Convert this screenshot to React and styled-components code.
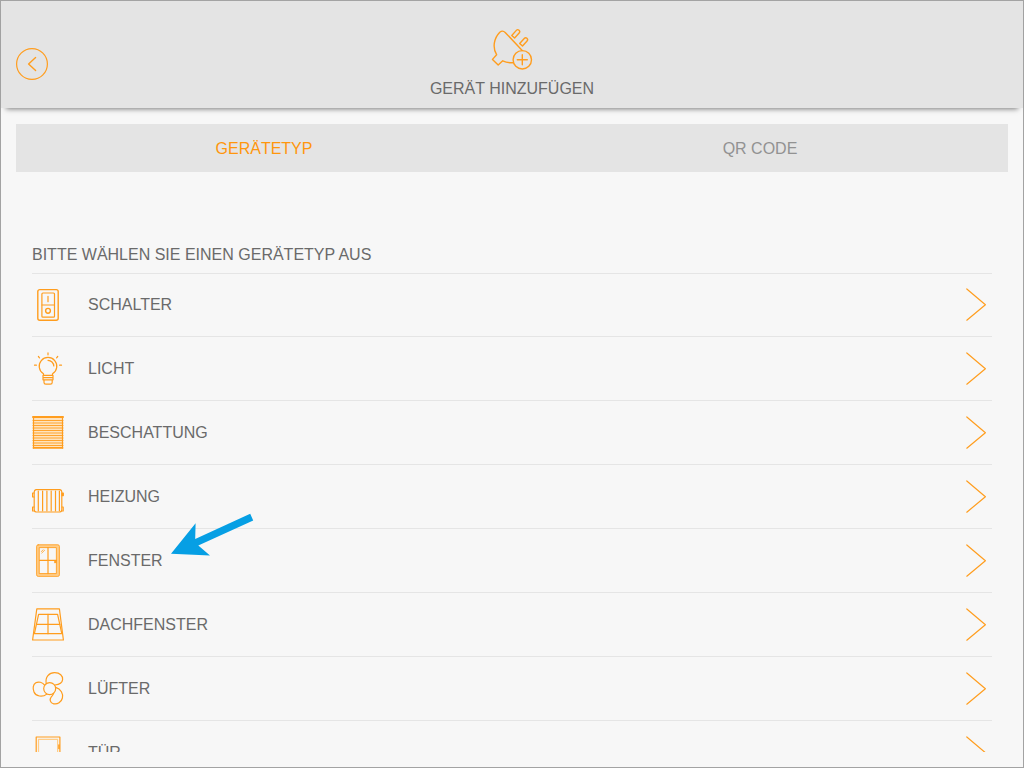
import React from "react";
import styled, { createGlobalStyle } from "styled-components";

const orange = "#ff9d1e";
const paleOrange = "#ffcd88";

const GlobalStyle = createGlobalStyle`
  * { box-sizing: border-box; }
  body {
    margin: 0;
    background: #f7f7f7;
    color: #6a6a6a;
    font-family: "Liberation Sans", Arial, Helvetica, sans-serif;
    font-size: 16px;
    line-height: 24px;
  }
  button {
    margin: 0;
    padding: 0;
    border: 0;
    background: none;
    color: inherit;
    font: inherit;
    cursor: pointer;
  }
`;

const Screen = styled.div`
  display: flex;
  flex-direction: column;
  height: 100vh;
  border: 1px solid #a3a3a3;
`;

const Header = styled.header`
  display: grid;
  grid-template-columns: 1fr auto 1fr;
  align-items: center;
  flex: none;
  padding: 19px 15px 0;
  background: #e4e4e4;
  box-shadow: 0 6px 5px -5px rgba(0, 0, 0, 0.5);
`;

const BackButton = styled.button`
  width: 32px;
  height: 32px;
`;

const TitleBlock = styled.div`
  display: flex;
  flex-direction: column;
  align-items: center;
  gap: 7px;
  padding: 8px 0 7px;
`;

const Title = styled.h1`
  margin: 0;
  font-size: 16px;
  font-weight: 400;
`;

const Drawing = styled.svg`
  display: block;
  flex: none;
  fill: none;
  stroke: ${orange};
  stroke-width: ${(p) => p.$weight || 1.2};
  stroke-linecap: round;
  stroke-linejoin: round;
`;

const Tabs = styled.div`
  display: grid;
  grid-template-columns: 1fr 1fr;
  flex: none;
  margin: 16px 15px 0;
  background: #e4e4e4;
`;

const Tab = styled.button`
  height: 48px;
  padding-top: 2px;
  color: ${(p) => (p.$active ? "#ff960c" : "#929292")};
`;

const Section = styled.main`
  display: flex;
  flex-direction: column;
  flex: 1;
  min-height: 0;
  padding: 71px 31px 15px;
`;

const SectionTitle = styled.h2`
  flex: none;
  margin: 0;
  padding-bottom: 6px;
  border-bottom: 1px solid #e5e5e5;
  font-size: 16px;
  font-weight: 400;
`;

const List = styled.ul`
  flex: 1;
  min-height: 0;
  margin: -1px 0 0;
  padding: 0;
  list-style: none;
  overflow-y: auto;
  scrollbar-width: none;
`;

const Item = styled.li`
  position: relative;
  border-bottom: 1px solid #e5e5e5;
`;

const RowButton = styled.button`
  display: flex;
  align-items: center;
  gap: 24px;
  width: 100%;
  padding: 15px 0 14px;
  text-align: left;
`;

const Label = styled.span`
  flex: 1;
`;

const Pointer = styled.svg`
  position: absolute;
  left: 138px;
  top: -16px;
  fill: #069fe4;
  pointer-events: none;
`;

const icons = {
  switch: (
    <>
      <rect x="5.8" y="1.6" width="20.4" height="30.6" rx="2" strokeWidth="1.4" />
      <rect x="9.9" y="5" width="12.6" height="24.2" rx="1" />
      <path d="M10 17H22.4M16 8.3V13.7" />
      <circle cx="16" cy="22.8" r="2.4" strokeWidth="1.4" />
    </>
  ),
  light: (
    <>
      <path d="M11.5 23.3V21.8A8.8 8.8 0 1 1 20.5 21.8V23.3" />
      <path d="M16 8.3A6 6 0 0 1 21.8 14" />
      <path d="M11 23.4H21V27.8H11ZM11 25.6H21M12 27.8V30.5Q12 32.2 13.8 32.2H18.4Q20.2 32.2 20.2 30.5V27.8" />
      <path d="M16 .9V2.8M2.5 13.2H4.4M27.6 13.2H29.5M6.4 4.5L7.5 5.8M25.7 4.5L24.6 5.8" />
    </>
  ),
  blind: (
    <>
      <rect x="1" y="1" width="30" height="31" fill="#ffe3bd" stroke="none" />
      <path d="M1 1.1H31" strokeWidth="2" />
      <path d="M1.5 1V32M30.5 1V32" />
      <path
        d="M1 4.5H31M1 7H31M1 9.5H31M1 12H31M1 14.5H31M1 17H31M1 19.5H31M1 22H31M1 24.5H31M1 27H31M1 29.5H31"
        strokeWidth=".9"
      />
      <path d="M1.5 31.9H30.5" strokeWidth="1.8" />
    </>
  ),
  heater: (
    <>
      <path d="M4 9.6H28Q29.8 10.2 29.8 12V29.4Q29.8 31.4 28 32H4Q2.2 31.4 2.2 29.4V12Q2.2 10.2 4 9.6Z" />
      <path d="M6.3 11V30.8M10.6 11V30.8M14.9 11V30.8M19.2 11V30.8M23.5 11V30.8M27.4 11V30.8" />
      <path d="M2 13H.6V17H2M2 27H.6V31H2M30 27H31.2V31H30" />
      <path d="M30 13H31.3V15.6H30Z" fill={orange} />
    </>
  ),
  window: (
    <>
      <rect x="5.8" y="1.9" width="20.4" height="29.2" rx="1" stroke={paleOrange} strokeWidth="3" />
      <rect x="4.6" y=".8" width="22.8" height="31.6" rx="1.6" strokeWidth=".8" />
      <rect x="7.6" y="3.6" width="16.8" height="26" strokeWidth=".9" />
      <path d="M16 3.6V29.6M7.6 16.4H24.4M22.8 17.4V18.6M24 17.2V18.6" />
      <path d="M9.5 7.5L11 5.8M9.8 9L12.6 6.3" strokeWidth=".8" />
    </>
  ),
  roofWindow: (
    <>
      <path d="M4.8 .8H27.4L31.4 32H.6Z" />
      <path d="M6.6 6.4H25.6L29.8 25.7H2.4Z" />
      <path d="M5.2 16.4H27.8M16 6.4V25.7" />
    </>
  ),
  fan: (
    <>
      <circle cx="17.7" cy="16.6" r="6" />
      <path d="M14.2 11.7C13 5 17.2 .8 22.5 .7C28 .6 31 4 30.6 7.6C30.2 11.4 27 12.6 23 13" />
      <path d="M12.6 13.2C10.6 10.2 6.4 9.2 3.8 10.8C.8 12.6 .6 17 2 20C3.8 24.4 10.4 25.6 14.8 22.1" />
      <path d="M23.7 15.4C29 17 31.4 22 30.4 26C29.3 30.5 25.5 32.5 21.7 31.8C17.8 31 17.4 27 19.3 24.8C20.3 23.7 21.2 23 21.6 21.3" />
    </>
  ),
  door: (
    <>
      <path d="M4.2 33V1H27.9V33" />
      <path d="M6.5 33V3.4H25.6V33" stroke={paleOrange} />
      <path d="M27 9V12.5" strokeWidth="1.6" />
    </>
  ),
};

const deviceTypes = [
  { label: "SCHALTER", icon: "switch" },
  { label: "LICHT", icon: "light" },
  { label: "BESCHATTUNG", icon: "blind" },
  { label: "HEIZUNG", icon: "heater" },
  { label: "FENSTER", icon: "window", pointed: true },
  { label: "DACHFENSTER", icon: "roofWindow" },
  { label: "LÜFTER", icon: "fan" },
  { label: "TÜR", icon: "door" },
];

function DeviceRow({ label, icon, pointed }) {
  return (
    <Item>
      <RowButton type="button">
        <Drawing width="32" height="34" viewBox="0 0 32 34" aria-hidden="true">
          {icons[icon]}
        </Drawing>
        <Label>{label}</Label>
        <Drawing width="32" height="34" viewBox="0 0 32 34" aria-hidden="true">
          <path d="M6.8 1L25.4 16.7L6.8 32.2" />
        </Drawing>
      </RowButton>
      {pointed && (
        <Pointer width="84" height="44" viewBox="0 0 84 44" aria-hidden="true">
          <path d="M1 40.8L25.6 10.3L25.2 26L80.2 .7L83.2 7.4L28.3 32.6L40 42.6Z" />
        </Pointer>
      )}
    </Item>
  );
}

export default function App() {
  return (
    <>
      <GlobalStyle />
      <Screen>
        <Header>
          <BackButton type="button" aria-label="Zurück">
            <Drawing width="32" height="32" viewBox="0 0 32 32" aria-hidden="true">
              <circle cx="16" cy="16" r="15.4" />
              <path d="M19.6 9.6L12.6 16L19.6 22.6" strokeWidth="1.4" />
            </Drawing>
          </BackButton>
          <TitleBlock>
            <Drawing width="42" height="42" viewBox="0 0 42 42" $weight={1.4} aria-hidden="true">
              <path d="M31.2 22.4L14.2 4.4C12.5 2.8 10.5 2.8 8.8 4.2C3 10 1.2 19.5 5.6 26.7L1.5 31.4L7.2 37L11.7 32.8C15 34.4 18.5 34.9 22 34.8" />
              <circle cx="31.3" cy="31.8" r="9.2" />
              <path d="M31.3 26.8V36.8M26.3 31.8H36.3" />
              <path transform="translate(22.2 8.7) rotate(42)" d="M-1.9 0V-6.8A1.9 1.9 0 0 1 1.9 -6.8V0Z" />
              <path transform="translate(30.1 16.8) rotate(42)" d="M-1.9 0V-6.8A1.9 1.9 0 0 1 1.9 -6.8V0Z" />
            </Drawing>
            <Title>GERÄT HINZUFÜGEN</Title>
          </TitleBlock>
        </Header>
        <Tabs role="tablist">
          <Tab type="button" role="tab" aria-selected="true" $active>
            GERÄTETYP
          </Tab>
          <Tab type="button" role="tab" aria-selected="false">
            QR CODE
          </Tab>
        </Tabs>
        <Section>
          <SectionTitle>BITTE WÄHLEN SIE EINEN GERÄTETYP AUS</SectionTitle>
          <List>
            {deviceTypes.map((type) => (
              <DeviceRow key={type.label} {...type} />
            ))}
          </List>
        </Section>
      </Screen>
    </>
  );
}
